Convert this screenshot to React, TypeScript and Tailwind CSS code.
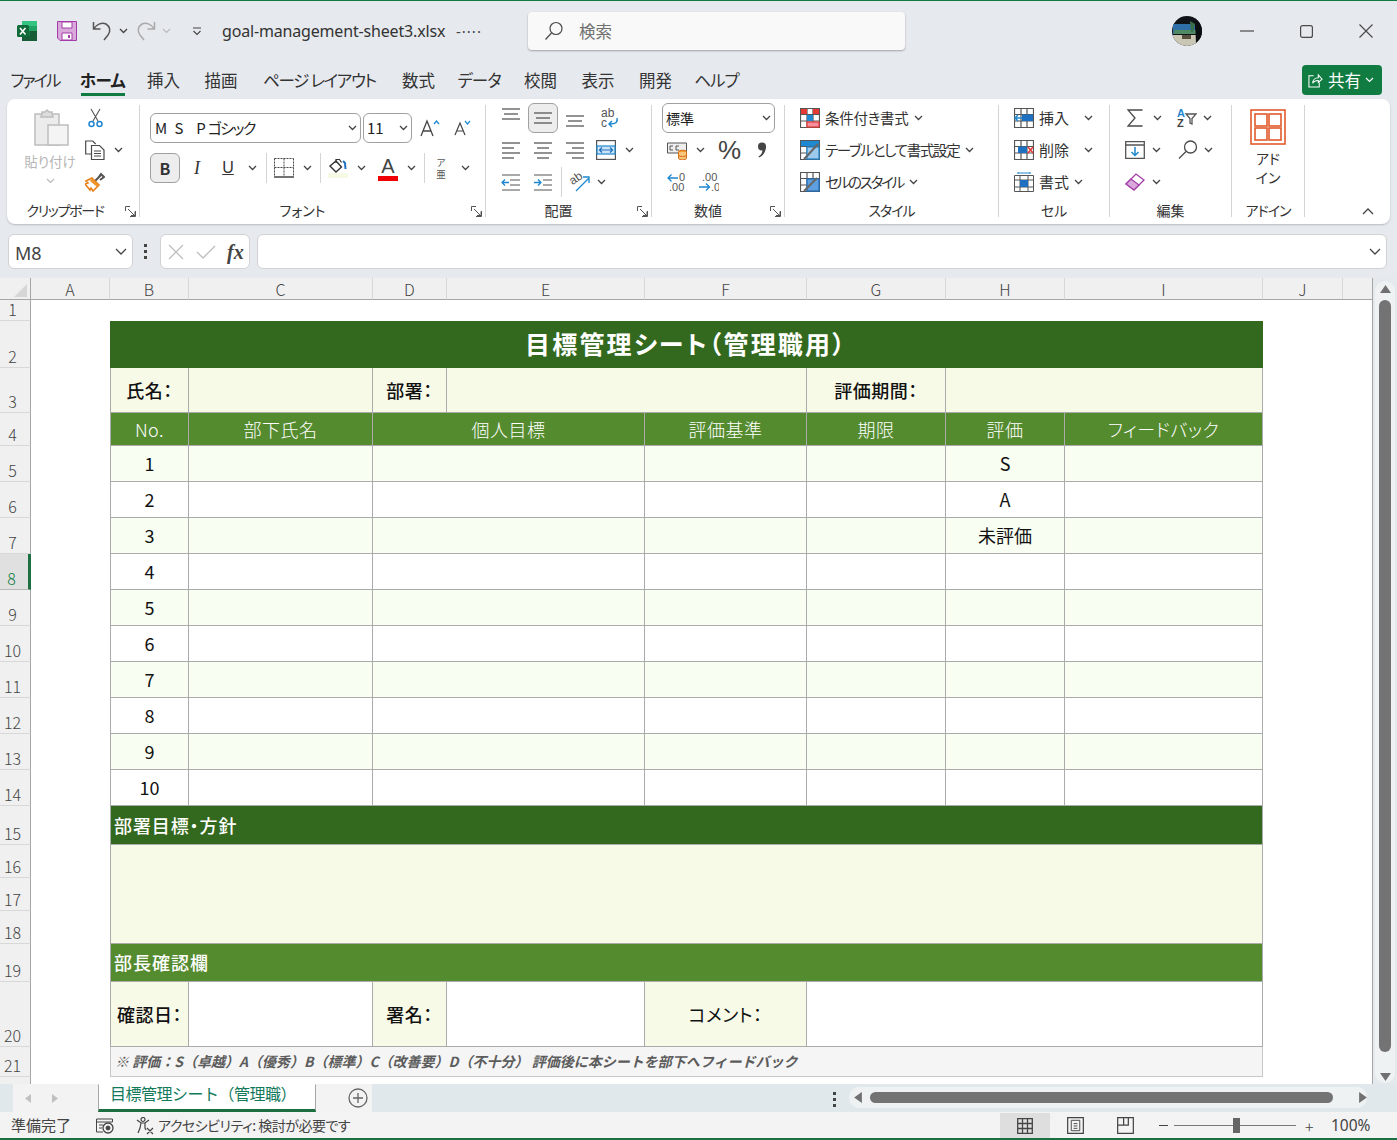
import type { ReactNode } from 'react'

interface IcoProps {
  className?: string
  vb?: string
  children?: ReactNode
}

function Ico({ className = '', vb = '0 0 20 20', children }: IcoProps) {
  return (
    <svg viewBox={vb} fill="none" stroke="#4a4a4a" strokeWidth="1.2" className={`block shrink-0 ${className}`}>
      {children}
    </svg>
  )
}

function Chev({ className = '' }: { className?: string }) {
  return (
    <svg viewBox="0 0 9 6" fill="none" stroke="#444" strokeWidth="1.3" className={`block shrink-0 w-[9px] h-[6px] ${className}`}>
      <path d="M1 1l3.5 3.5L8 1" />
    </svg>
  )
}

function Launcher() {
  return (
    <svg viewBox="0 0 11 11" fill="none" stroke="#555" className="absolute right-[3px] top-[8px] w-[11px] h-[11px]">
      <path d="M.5 5V.5H5M3 3l6 6M10.500 5v5.500H5M6 9.500h4V5.500" />
    </svg>
  )
}

function Sep() {
  return <div className="w-px h-[112px] mt-[6px] bg-[#d4d4d4] shrink-0" />
}

function VSep({ className = '' }: { className?: string }) {
  return <div className={`w-px h-[30px] bg-[#d4d4d4] shrink-0 ${className}`} />
}

function Group({ label, launcher, width, labelClass = '', children }: { label: string; launcher?: boolean; width: string; labelClass?: string; children: ReactNode }) {
  return (
    <>
      <div className={`flex flex-col pt-[3px] shrink-0 ${width}`}>
        <div className="h-[96px]">{children}</div>
        <div className={`relative flex justify-center h-[26px] text-[14px] leading-[24px] text-[#333] ${labelClass}`}>
          <span>{label}</span>
          {launcher && <Launcher />}
        </div>
      </div>
      <Sep />
    </>
  )
}

function Row({ className = '', children }: { className?: string; children: ReactNode }) {
  return <div className={`flex items-center h-[32px] ${className}`}>{children}</div>
}

// ---- ribbon icons

function AlignLines({ lines, className = '' }: { lines: number[][]; className?: string }) {
  return (
    <Ico className={`w-[20px] h-[20px] ${className}`}>
      {lines.map(([x1, x2, y]) => (
        <path key={y} d={`M${x1} ${y}H${x2}`} />
      ))}
    </Ico>
  )
}

function GridBase({ children, className = '' }: { children?: ReactNode; className?: string }) {
  return (
    <Ico className={`w-[20px] h-[20px] ${className}`}>
      <path d="M.5.5h19v19H.5zM.5 6.5h19M.5 13h19M7 .5v19M13 .5v19" stroke="#555" />
      {children}
    </Ico>
  )
}

function ExcelLogo() {
  return (
    <svg viewBox="0 0 20 20" className="block w-[20px] h-[20px]">
      <rect x="5" y="0" width="15" height="20" rx="1.5" fill="#21a366" />
      <rect x="5" y="0" width="15" height="5" fill="#33c481" />
      <rect x="12.5" y="5" width="7.5" height="5" fill="#21a366" />
      <rect x="5" y="10" width="7.5" height="5" fill="#107c41" />
      <rect x="12.5" y="10" width="7.5" height="5" fill="#185c37" />
      <rect x="5" y="15" width="15" height="5" fill="#185c37" />
      <rect x="0" y="4" width="12" height="12" rx="1.5" fill="#0f6b3a" />
      <path d="M3 7l5.5 6.5M8.5 7L3 13.5" stroke="#fff" strokeWidth="1.6" />
    </svg>
  )
}

function Avatar() {
  return (
    <svg viewBox="0 0 30 30" className="block w-[30px] h-[30px]">
      <clipPath id="av">
        <circle cx="15" cy="15" r="15" />
      </clipPath>
      <g clipPath="url(#av)">
        <rect width="30" height="30" fill="#101418" />
        <rect x="1" y="8" width="22" height="10" fill="#2f6fa8" />
        <rect x="2" y="14" width="22" height="4" fill="#4f8a64" />
        <path d="M1 19h26v11H1z" fill="#c9c6b4" />
        <path d="M18 5l5 3-2 8h-2z" fill="#38704a" />
        <rect x="10" y="19" width="9" height="4" fill="#57503f" />
        <path d="M23 2h7v26h-6z" fill="#0c0f12" />
      </g>
    </svg>
  )
}

const TABS = [
  { t: 'ファイル', c: 'w-[46px] tracking-[-2px]' },
  { t: 'ホーム', c: 'w-[43px] ml-[23px] tracking-[-0.5px]', on: true },
  { t: '挿入', c: 'w-[33px] ml-[23px]' },
  { t: '描画', c: 'w-[34px] ml-[24px]' },
  { t: 'ページ レイアウト', c: 'w-[111px] ml-[26px] tracking-[-1.300px]' },
  { t: '数式', c: 'w-[33px] ml-[27px]' },
  { t: 'データ', c: 'w-[40px] ml-[24px] tracking-[-1px]' },
  { t: '校閲', c: 'w-[33px] ml-[25px]' },
  { t: '表示', c: 'w-[34px] ml-[24px]' },
  { t: '開発', c: 'w-[33px] ml-[24px]' },
  { t: 'ヘルプ', c: 'w-[41px] ml-[24px] tracking-[-1px]' },
]

function TitleBar() {
  return (
    <div className="flex items-center h-[60px] shrink-0">
      <div className="ml-[17px]"><ExcelLogo /></div>
      <svg viewBox="0 0 20 20" className="block w-[20px] h-[20px] ml-[20px]">
        <path d="M.5.5h19v19H3L.5 17z" fill="#d9a9dc" stroke="#a33ca8" />
        <path d="M5 1h10v6H5zM5 12h10v7H5z" fill="#fff" stroke="#a33ca8" />
        <path d="M11 14h2v3h-2z" fill="#a33ca8" />
      </svg>
      <Ico className="w-[20px] h-[20px] ml-[15px]" vb="0 0 20 20">
        <path d="M1.5 1v7h7M1.5 8C5 3 10 1 14 3c4 2.5 5 7 2 11l-4 5" strokeWidth="1.5" stroke="#555" />
      </Ico>
      <Chev className="ml-[7px]" />
      <svg viewBox="0 0 20 20" fill="none" stroke="#aaa" strokeWidth="1.5" className="block w-[20px] h-[20px] ml-[8px]">
        <path d="M18.5 1v7h-7M18.5 8C15 3 10 1 6 3c-4 2.5-5 7-2 11l4 5" />
      </svg>
      <svg viewBox="0 0 9 6" fill="none" stroke="#bbb" strokeWidth="1.2" className="block w-[9px] h-[6px] ml-[6px]"><path d="M1 1l3.5 3.5L8 1" /></svg>
      <svg viewBox="0 0 10 9" fill="none" stroke="#444" strokeWidth="1.1" className="block w-[10px] h-[9px] ml-[21px]"><path d="M1 1h8M1.5 4l3.5 3.500L8.500 4" /></svg>
      <span className="ml-[20px] w-[234px] whitespace-nowrap font-['Noto_Sans',sans-serif] text-[16px] text-[#333] tracking-[-0.170px]">goal-management-sheet3.xlsx</span>
      <span className="w-[72px] font-['Noto_Sans',sans-serif] text-[15px] text-[#444] tracking-[1px]">-····</span>
      <div className="flex items-center w-[377px] h-[38px] rounded-[4px] bg-[#f9f9f9] shadow-[0_1px_2px_rgba(0,0,0,0.3)]">
        <Ico className="w-[20px] h-[20px] ml-[16px]">
          <circle cx="12" cy="7.500" r="6" />
          <path d="M7.500 12l-6 6.500" />
        </Ico>
        <span className="ml-[15px] text-[16.500px] text-[#707070]">検索</span>
      </div>
      <div className="ml-[267px]"><Avatar /></div>
      <Ico className="w-[14px] h-[14px] ml-[38px]" vb="0 0 14 14"><path d="M0 7h14" /></Ico>
      <Ico className="w-[13px] h-[13px] ml-[46px]" vb="0 0 13 13"><rect x=".6" y=".6" width="11.800" height="11.800" rx="2" /></Ico>
      <Ico className="w-[14px] h-[14px] ml-[46px]" vb="0 0 14 14"><path d="M.5.5l13 13M13.500.5L.5 13.500" /></Ico>
    </div>
  )
}

function TabBar() {
  return (
    <div className="flex h-[38px] shrink-0">
      <div className="flex ml-[12px] pt-[7px]">
        {TABS.map(({ t, c, on }) => (
          <div key={t} className={`${c} h-[26px] flex flex-col items-center whitespace-nowrap text-[16.500px] leading-[24px] ${on ? 'font-bold text-[#222]' : 'text-[#333]'}`}>
            <span>{t}</span>
            {on && <div className="w-[44px] h-[3px] bg-[#107c41] mt-[1px] shrink-0" />}
          </div>
        ))}
      </div>
      <div className="ml-auto mr-[15px] mt-[4px] flex items-center w-[80px] h-[30px] rounded-[4px] bg-[#107c41] text-white text-[16.500px]">
        <svg viewBox="0 0 16 16" fill="none" stroke="#fff" strokeWidth="1.1" className="block w-[15px] h-[15px] ml-[6px]">
          <path d="M6 3H1v12h11v-5M5 11c0-4 3-6 6-6V2l4 4.500L11 10V8c-3 0-5 1-6 3z" />
        </svg>
        <span className="ml-[5px]">共有</span>
        <svg viewBox="0 0 9 6" fill="none" stroke="#fff" strokeWidth="1.2" className="block w-[9px] h-[6px] ml-[4px]"><path d="M1 1l3.500 3.500L8 1" /></svg>
      </div>
    </div>
  )
}

function Clipboard() {
  return (
    <Group label="クリップボード" launcher width="w-[132px]" labelClass="pr-[16px] tracking-[-1.300px]">
      <div className="relative h-full">
        <div className="flex h-full">
          <div className="flex flex-col items-center w-[52px] ml-[17px]">
            <svg viewBox="0 0 36 38" fill="#ececec" stroke="#bdbdbd" strokeWidth="1.5" className="block w-[36px] h-[38px] mt-[7px] ml-[4px]">
              <path d="M1 5h24v31H1z" />
              <path d="M8 5V3h3l2-2 2 2h3v2l1 3H7z" fill="#ddd" />
              <path d="M14 16h20v20H14z" fill="#f4f4f4" />
            </svg>
            <span className="mt-[5px] text-[13.500px] leading-[18px] text-[#b5b5b5]">貼り付け</span>
            <svg viewBox="0 0 9 6" fill="none" stroke="#bbb" strokeWidth="1.2" className="block w-[9px] h-[6px] mt-[8px]"><path d="M1 1l3.500 3.500L8 1" /></svg>
          </div>
          <div className="flex flex-col ml-[9px]">
            <Row>
              <svg viewBox="0 0 15 20" fill="none" stroke="#555" strokeWidth="1.1" className="block w-[15px] h-[20px] ml-[3px]">
                <path d="M3 1l7 12M12 1L5 13" />
                <circle cx="3.500" cy="16" r="2.500" stroke="#1e88d0" strokeWidth="1.500" />
                <circle cx="11.500" cy="16" r="2.500" stroke="#1e88d0" strokeWidth="1.500" />
              </svg>
            </Row>
            <Row>
              <Ico className="w-[20px] h-[20px]">
                <path d="M6 14H.7V1h7l3 3" />
                <path d="M6.500 5.500h8l4.500 4.500v9.500H6.500z" fill="#fff" />
                <path d="M9 11h7M9 13.500h7M9 16h7" strokeWidth="1" />
              </Ico>
              <Chev className="ml-[9px]" />
            </Row>
            <Row>
              <svg viewBox="0 0 20 20" className="block w-[20px] h-[20px]" fill="none">
                <path d="M10 9l6-6M13 6l3-4 3 3-4 3" stroke="#555" strokeWidth="2" />
                <path d="M7 6l7 7-6 6-2-3-1 2-5-6 3-1-2-2z" fill="#fff" stroke="#e8801a" strokeWidth="1.600" />
                <path d="M7 6.500l7 6.500-2.500 1.500L5 9z" fill="#f0942a" />
              </svg>
            </Row>
          </div>
        </div>
      </div>
    </Group>
  )
}

function FontGroup() {
  return (
    <Group label="フォント" launcher width="w-[345px]" labelClass="pr-[20px]">
      <div className="flex items-center mt-[11px] h-[30px] ml-[10px]">
        <div className="flex items-center w-[211px] h-[30px] rounded-[6px] border border-[#a0a0a0] text-[15px] text-[#222]">
          <span className="ml-[4px] whitespace-pre tracking-[2px]">M S  P</span>
          <span className="tracking-[-1.500px]">ゴシック</span>
          <Chev className="ml-auto mr-[3px]" />
        </div>
        <div className="flex items-center w-[49px] h-[30px] ml-[2px] rounded-[6px] border border-[#a0a0a0] text-[15px] text-[#222]">
          <span className="ml-[3px]">11</span>
          <Chev className="ml-auto mr-[3px]" />
        </div>
        <svg viewBox="0 0 20 18" fill="none" stroke="#444" strokeWidth="1.3" className="block w-[20px] h-[18px] ml-[8px]">
          <path d="M1 17L7 2l6 15M3 12h8" />
          <path d="M14 5l2.500-3L19 5" stroke="#1e88d0" />
        </svg>
        <svg viewBox="0 0 18 16" fill="none" stroke="#444" strokeWidth="1.2" className="block w-[18px] h-[16px] ml-[14px]">
          <path d="M1 15L6 3l5 12M3 11h6" />
          <path d="M11 1l2.500 3L16 1" stroke="#1e88d0" />
        </svg>
      </div>
      <div className="flex items-center mt-[10px] h-[30px] ml-[10px]">
        <div className="flex items-center justify-center w-[30px] h-[30px] rounded-[6px] border border-[#a0a0a0] bg-[#ededed] text-[16px] font-bold text-[#333]">B</div>
        <span className="w-[14px] ml-[10px] text-center font-['Liberation_Serif',serif] italic text-[18px] text-[#333]">I</span>
        <span className="w-[14px] ml-[17px] text-center font-['Liberation_Sans',sans-serif] underline text-[16px] text-[#333]">U</span>
        <Chev className="ml-[13px]" />
        <VSep className="ml-[9px]" />
        <svg viewBox="0 0 20 20" fill="none" stroke="#444" strokeDasharray="2 1" className="block w-[20px] h-[20px] ml-[7px]">
          <path d="M.5.500h19M.500.500v18M19.500.500v18M.500 9.500h19M10 .500v18" />
          <path d="M0 19h20" strokeDasharray="none" strokeWidth="1.500" />
        </svg>
        <Chev className="ml-[9px]" />
        <VSep className="ml-[8px]" />
        <svg viewBox="0 0 20 20" fill="none" className="block w-[20px] h-[20px] ml-[7px]">
          <rect x="0" y="15" width="20" height="5" fill="#f6f9e4" />
          <path d="M2 8l6-5 5.500 6-5.500 5z" stroke="#333" strokeWidth="1.400" />
          <path d="M8 5V1.500h3.500l2 3" stroke="#333" strokeWidth="1.200" />
          <path d="M15 3l2 2 .5 6" stroke="#1e70c0" strokeWidth="2" />
        </svg>
        <Chev className="ml-[9px]" />
        <div className="flex flex-col items-center w-[20px] ml-[12px]">
          <span className="font-['Liberation_Sans',sans-serif] text-[20px] leading-[20px] text-[#444]">A</span>
          <div className="w-[20px] h-[5px] bg-[#f00000]" />
        </div>
        <Chev className="ml-[9px]" />
        <VSep className="ml-[8px]" />
        <div className="flex flex-col items-center w-[12px] ml-[10px] text-[9.500px] leading-[12px] text-[#555]">
          <span>ア</span>
          <span>亜</span>
        </div>
        <Chev className="ml-[14px]" />
      </div>
    </Group>
  )
}

function AlignGroup() {
  return (
    <Group label="配置" launcher width="w-[165px]" labelClass="pr-[20px]">
      <Row className="pl-[15px]">
        <AlignLines lines={[[1, 19, 3], [3, 17, 8], [1, 19, 13]]} className="-mt-[5px]" />
        <div className="flex items-center justify-center w-[30px] h-[30px] ml-[7px] rounded-[6px] border border-[#a0a0a0] bg-[#ededed]">
          <AlignLines lines={[[1, 19, 5], [3, 17, 10], [1, 19, 15]]} />
        </div>
        <AlignLines lines={[[1, 19, 8], [3, 17, 13], [1, 19, 18]]} className="ml-[7px]" />
        <svg viewBox="0 0 20 22" fill="none" stroke="#555" className="block w-[20px] h-[22px] ml-[14px] overflow-visible">
          <text x="2" y="10" fontSize="12" fill="#555" stroke="none" fontFamily="Liberation Sans">ab</text>
          <text x="2" y="20" fontSize="12" fill="#555" stroke="none" fontFamily="Liberation Sans">c</text>
          <path d="M18 11c1 4-1 6-7 6M13 14l-3 3 3 3" stroke="#1e88d0" strokeWidth="1.500" />
        </svg>
      </Row>
      <Row className="pl-[15px]">
        <AlignLines lines={[[1, 19, 3], [1, 13, 8], [1, 19, 13], [1, 13, 18]]} />
        <AlignLines lines={[[1, 19, 3], [4, 16, 8], [1, 19, 13], [4, 16, 18]]} className="ml-[12px]" />
        <AlignLines lines={[[1, 19, 3], [7, 19, 8], [1, 19, 13], [7, 19, 18]]} className="ml-[12px]" />
        <svg viewBox="0 0 20 20" fill="none" stroke="#555" strokeWidth="1.200" className="block w-[20px] h-[20px] ml-[11px]">
          <rect x=".6" y=".6" width="18.800" height="18.800" fill="#fff" />
          <rect x="1" y="6" width="18" height="8" fill="#cde4f5" stroke="#1e88d0" />
          <path d="M4 10h12M6 7.500L3.500 10 6 12.500M14 7.500l2.500 2.500-2.500 2.500" stroke="#1e70c0" />
        </svg>
        <Chev className="ml-[9px]" />
      </Row>
      <Row className="pl-[15px]">
        <svg viewBox="0 0 20 20" fill="none" stroke="#555" className="block w-[20px] h-[20px]">
          <path d="M1 3h18M9 8h10M9 13h10M1 18h18" />
          <path d="M8 10.500H1M4 7.500l-3 3 3 3" stroke="#1e88d0" strokeWidth="1.300" />
        </svg>
        <svg viewBox="0 0 20 20" fill="none" stroke="#555" className="block w-[20px] h-[20px] ml-[12px]">
          <path d="M1 3h18M10 8h9M10 13h9M1 18h18" />
          <path d="M1 10.500h7M5 7.500l3 3-3 3" stroke="#1e88d0" strokeWidth="1.300" />
        </svg>
        <VSep className="ml-[8px]" />
        <svg viewBox="0 0 21 20" fill="none" stroke="#1e88d0" strokeWidth="1.300" className="block w-[21px] h-[20px] ml-[7px] overflow-visible">
          <text x="1" y="11" fontSize="12" fill="#555" stroke="none" fontFamily="Liberation Sans" transform="rotate(-35 6 8)">ab</text>
          <path d="M7 19L20 6M14 5h6v6" />
        </svg>
        <Chev className="ml-[7px]" />
      </Row>
    </Group>
  )
}

function NumberGroup() {
  return (
    <Group label="数値" launcher width="w-[132px]" labelClass="pr-[20px]">
      <div className="flex items-center mt-[1px] ml-[10px] w-[113px] h-[30px] rounded-[6px] border border-[#a0a0a0] text-[14px] text-[#222]">
        <span className="ml-[3px]">標準</span>
        <Chev className="ml-auto mr-[3px]" />
      </div>
      <Row className="pl-[15px] mt-[1px]">
        <svg viewBox="0 0 21 20" fill="none" stroke="#555" className="block w-[21px] h-[20px]">
          <path d="M.5 3h19v10H.5z" fill="#eee" />
          <path d="M6 6H3v4h3M12 6H9v4h3" />
          <ellipse cx="15.500" cy="12" rx="4" ry="1.800" fill="#f0a030" stroke="#d96b10" />
          <path d="M11.500 12v6c0 2.500 8 2.500 8 0v-6M11.500 15c0 2 8 2 8 0" fill="#f6c67f" stroke="#d96b10" />
        </svg>
        <Chev className="ml-[8px]" />
        <span className="ml-[13px] w-[21px] text-center font-['Liberation_Sans',sans-serif] text-[26px] leading-[30px] text-[#444]">%</span>
        <svg viewBox="0 0 12 16" fill="#444" className="block w-[12px] h-[16px] ml-[17px]">
          <circle cx="6" cy="4.500" r="4" />
          <path d="M9.800 4.500C10 10 7 14 3 15.500l-.5-1C5 13 6.500 10.500 6.500 8z" />
        </svg>
      </Row>
      <Row className="pl-[15px]">
        <svg viewBox="0 0 20 20" className="block w-[20px] h-[20px]" fill="none">
          <path d="M11 6H1M4.500 2.500L1 6l3.500 3.500" stroke="#1e88d0" strokeWidth="1.300" />
          <text x="12" y="9" fontSize="11" fill="#555" fontFamily="Liberation Sans">0</text>
          <text x="2" y="19" fontSize="11" fill="#555" fontFamily="Liberation Sans">.00</text>
        </svg>
        <svg viewBox="0 0 20 20" className="block w-[20px] h-[20px] ml-[12px]" fill="none">
          <text x="3" y="9" fontSize="11" fill="#555" fontFamily="Liberation Sans">.00</text>
          <path d="M0 15h10M7 11.500l3.500 3.500L7 18.500" stroke="#1e88d0" strokeWidth="1.300" />
          <text x="12" y="19" fontSize="11" fill="#555" fontFamily="Liberation Sans">.0</text>
        </svg>
      </Row>
    </Group>
  )
}

function StyleGroup() {
  const rows = [
    {
      t: '条件付き書式',
      c: 'tracking-[-0.300px]',
      icon: (
        <GridBase>
          <rect x="1" y="1" width="6" height="5" fill="#e53935" stroke="none" />
          <rect x="13" y="1" width="6" height="5" fill="#e53935" stroke="none" />
          <rect x="7" y="7" width="6" height="6" fill="#1e88d0" stroke="none" />
          <rect x="7" y="14" width="12" height="5" fill="#f48fa0" stroke="#e53935" />
        </GridBase>
      ),
    },
    {
      t: 'テーブルとして書式設定',
      c: 'tracking-[-1.300px]',
      icon: (
        <GridBase>
          <rect x="1" y="1" width="18" height="5" fill="#1e88d0" stroke="none" />
          <rect x="7" y="7" width="12" height="12" fill="#9cc9ec" stroke="#1e88d0" />
          <path d="M18 4L7 16l-3 3" stroke="#666" strokeWidth="2" />
        </GridBase>
      ),
    },
    {
      t: 'セルのスタイル',
      c: 'tracking-[-2.200px]',
      icon: (
        <GridBase>
          <rect x="7" y="7" width="12" height="12" fill="#5f9fdd" stroke="#1e70c0" />
          <path d="M17 6L7 16l-3 3" stroke="#666" strokeWidth="2" />
        </GridBase>
      ),
    },
  ]
  return (
    <Group label="スタイル" width="w-[213px]" labelClass="tracking-[-1px]">
      {rows.map(({ t, c, icon }) => (
        <Row key={t} className="pl-[15px] text-[14.500px] text-[#333]">
          {icon}
          <span className={`ml-[5px] whitespace-nowrap ${c}`}>{t}</span>
          <Chev className="ml-[6px]" />
        </Row>
      ))}
    </Group>
  )
}

function CellGroup() {
  return (
    <Group label="セル" width="w-[110px]">
      <Row className="pl-[15px] text-[15px] text-[#333]">
        <GridBase>
          <rect x="8" y="6.500" width="11" height="6.500" fill="#1e70c0" stroke="none" />
          <path d="M8 10H1M4 7l-3 3 3 3" stroke="#1e88d0" strokeWidth="1.500" />
        </GridBase>
        <span className="ml-[5px] w-[33px]">挿入</span>
        <Chev className="ml-[12px]" />
      </Row>
      <Row className="pl-[15px] text-[15px] text-[#333]">
        <GridBase>
          <rect x="4" y="6.500" width="9" height="6.500" fill="#1e70c0" stroke="none" />
          <path d="M14 7l5 6M19 7l-5 6" stroke="#e53935" strokeWidth="1.500" />
        </GridBase>
        <span className="ml-[5px] w-[33px]">削除</span>
        <Chev className="ml-[12px]" />
      </Row>
      <Row className="pl-[15px] text-[15px] text-[#333]">
        <svg viewBox="0 0 20 20" fill="none" stroke="#555" className="block w-[20px] h-[20px]">
          <path d="M.5 3.500h19v16H.500zM.500 8h19M.500 15h19M6 3.500v16M14 3.500v16" />
          <rect x="6" y="8" width="8" height="7" fill="#1e70c0" stroke="none" />
          <path d="M4 1h12M4 0v2M16 0v2" stroke="#1e88d0" />
        </svg>
        <span className="ml-[5px] w-[33px]">書式</span>
        <Chev className="ml-[2px]" />
      </Row>
    </Group>
  )
}

function EditGroup() {
  return (
    <Group label="編集" width="w-[121px]">
      <Row className="pl-[17px]">
        <Ico className="w-[16px] h-[18px]" vb="0 0 16 18"><path d="M15.500 1H1l7 8-7 8h14.500" strokeWidth="1.300" /></Ico>
        <Chev className="ml-[10px]" />
        <svg viewBox="0 0 20 20" fill="none" stroke="#555" className="block w-[20px] h-[20px] ml-[15px] overflow-visible">
          <text x="0" y="9" fontSize="11" fontWeight="700" fill="#1e88d0" stroke="none" fontFamily="Liberation Sans">A</text>
          <text x="0" y="19" fontSize="11" fontWeight="700" fill="#444" stroke="none" fontFamily="Liberation Sans">Z</text>
          <path d="M9 6h10l-4 4.500V16l-2-1v-4.500z" strokeWidth="1.300" />
        </svg>
        <Chev className="ml-[6px]" />
      </Row>
      <Row className="pl-[15px]">
        <svg viewBox="0 0 20 18" fill="none" stroke="#555" strokeWidth="1.300" className="block w-[20px] h-[18px]">
          <path d="M.7.700h18.600v16.600H.700zM.700 4h18.600" />
          <path d="M10 6v8M6.500 11l3.500 3.500 3.500-3.500" stroke="#1e88d0" strokeWidth="1.500" />
        </svg>
        <Chev className="ml-[7px]" />
        <Ico className="w-[20px] h-[20px] ml-[17px]" vb="0 0 20 20">
          <circle cx="12.500" cy="7" r="6" strokeWidth="1.300" />
          <path d="M8 11.500l-7 7" strokeWidth="1.300" />
        </Ico>
        <Chev className="ml-[6px]" />
      </Row>
      <Row className="pl-[15px]">
        <svg viewBox="0 0 20 20" fill="none" stroke="#a33ca8" strokeWidth="1.300" className="block w-[20px] h-[20px]">
          <path d="M1 12L11 2l8 6-10 10z" fill="#fff" />
          <path d="M1 12l5-5 8 6-5 5z" fill="#d9a9dc" />
        </svg>
        <Chev className="ml-[7px]" />
      </Row>
    </Group>
  )
}

function Ribbon() {
  return (
    <div className="flex mx-[7px] h-[125px] shrink-0 rounded-[8px] bg-white shadow-[0_1px_2px_rgba(0,0,0,0.2)]">
      <Clipboard />
      <FontGroup />
      <AlignGroup />
      <NumberGroup />
      <StyleGroup />
      <CellGroup />
      <EditGroup />
      <Group label="アドイン" width="w-[72px]" labelClass="tracking-[-1px]">
        <div className="flex flex-col items-center">
          <svg viewBox="0 0 36 36" fill="none" stroke="#e05a2b" strokeWidth="1.600" className="block w-[36px] h-[36px] mt-[7px]">
            <rect x="1" y="1" width="34" height="34" />
            <rect x="5" y="5" width="12" height="12" />
            <rect x="19" y="5" width="12" height="12" />
            <rect x="5" y="19" width="12" height="12" />
            <rect x="19" y="19" width="12" height="12" />
          </svg>
          <span className="mt-[4px] text-[14px] leading-[19px] text-[#333]">アド</span>
          <span className="text-[14px] leading-[19px] text-[#333]">イン</span>
        </div>
      </Group>
      <div className="flex-1 flex justify-end items-end pb-[9px] pr-[16px]">
        <svg viewBox="0 0 12 7" fill="none" stroke="#444" strokeWidth="1.300" className="block w-[12px] h-[7px]"><path d="M1 6l5-5 5 5" /></svg>
      </div>
    </div>
  )
}

function FormulaBar() {
  return (
    <div className="flex items-center mt-[10px] ml-[8px] mr-[10px] h-[35px] shrink-0">
      <div className="flex items-center w-[125px] h-[35px] rounded-[6px] border border-[#d2d2d2] bg-white">
        <span className="ml-[6px] pt-[3px] font-['Noto_Sans',sans-serif] text-[18px] text-[#444]">M8</span>
        <svg viewBox="0 0 12 7" fill="none" stroke="#444" strokeWidth="1.300" className="block w-[12px] h-[7px] ml-auto mr-[5px]"><path d="M1 1l5 5 5-5" /></svg>
      </div>
      <div className="flex flex-col gap-[3px] ml-[11px]">
        <div className="w-[3px] h-[3px] bg-[#444]" />
        <div className="w-[3px] h-[3px] bg-[#444]" />
        <div className="w-[3px] h-[3px] bg-[#444]" />
      </div>
      <div className="flex items-center w-[90px] h-[35px] ml-[13px] rounded-[6px] border border-[#d2d2d2] bg-white">
        <svg viewBox="0 0 16 16" fill="none" stroke="#bdbdbd" strokeWidth="1.300" className="block w-[16px] h-[16px] ml-[7px]"><path d="M1 1l14 14M15 1L1 15" /></svg>
        <svg viewBox="0 0 20 14" fill="none" stroke="#bdbdbd" strokeWidth="1.300" className="block w-[20px] h-[14px] ml-[12px]"><path d="M1 7l6 6L19 1" /></svg>
        <span className="ml-[11px] font-['Liberation_Serif',serif] italic font-bold text-[20px] text-[#444]">fx</span>
      </div>
      <div className="flex items-center flex-1 h-[35px] ml-[7px] rounded-[6px] border border-[#d2d2d2] bg-white">
        <svg viewBox="0 0 12 7" fill="none" stroke="#444" strokeWidth="1.300" className="block w-[12px] h-[7px] ml-auto mr-[5px]"><path d="M1 1l5 5 5-5" /></svg>
      </div>
    </div>
  )
}

// ---- sheet

const LETTERS = ['A', 'B', 'C', 'D', 'E', 'F', 'G', 'H', 'I']
const line = 'border-r border-b border-[#ababab]'

function RowHead({ n, active }: { n: number; active?: boolean }) {
  return (
    <div className={`flex items-end justify-center pr-[5px] pb-[1px] border-b overflow-hidden text-[16px] leading-[19px] font-light ${active ? 'bg-[#e0e0e0] border-r-[3px] border-r-[#1d6f42] border-b-[#b8b8b8] text-[#107c41]' : 'bg-[#f0f0f0] border-r border-r-[#a6a6a6] border-b-[#d8d8d8] text-[#444]'}`}>
      {n}
    </div>
  )
}

function Blank({ className = '' }: { className?: string }) {
  return <div className={className} />
}

function Cell({ className = '', children }: { className?: string; children?: ReactNode }) {
  return <div className={`flex items-center justify-center whitespace-nowrap overflow-hidden ${line} ${className}`}>{children}</div>
}

function DataRow({ i, ev }: { i: number; ev?: string }) {
  const bg = i % 2 === 0 ? 'bg-[#f8fef2]' : 'bg-white'
  return (
    <>
      <RowHead n={i + 5} active={i === 3} />
      <Blank />
      <Cell className={`${bg} border-l text-[18px] text-[#111]`}>{i + 1}</Cell>
      <Cell className={bg} />
      <Cell className={`${bg} col-span-2`} />
      <Cell className={bg} />
      <Cell className={bg} />
      <Cell className={`${bg} text-[18px] text-[#111]`}>{ev}</Cell>
      <Cell className={bg} />
      <Blank />
    </>
  )
}

function Sheet() {
  const label = 'bg-[#f8fae8] text-[18px] font-medium text-[#111] tracking-[0.5px]'
  const head = 'bg-[#558b2f] text-[18px] font-light text-white tracking-[0.5px]'
  return (
    <div className="grid flex-1 bg-white grid-cols-[31px_79px_79px_184px_74px_198px_162px_139px_119px_198px_109px] grid-rows-[22px_21px_47px_45px_33px_repeat(10,36px)_39px_33px_33px_33px_38px_65px_30px_7px] border-r border-[#a6a6a6]">
      <div className="flex items-end justify-end bg-[#f0f0f0] border-r border-b border-[#a6a6a6]">
        <svg viewBox="0 0 13 13" className="block w-[13px] h-[13px] mr-[3px] mb-[2px]"><path d="M13 0v13H0z" fill="#d6d6d6" /></svg>
      </div>
      {LETTERS.map(l => (
        <div key={l} className="flex items-center justify-center bg-[#f0f0f0] border-r border-b border-r-[#d8d8d8] border-b-[#a6a6a6] text-[16px] font-light text-[#444] overflow-hidden">{l}</div>
      ))}
      <div className="flex bg-[#f0f0f0] border-b border-[#a6a6a6] overflow-hidden">
        <div className="flex items-center justify-center w-[80px] border-r border-[#d8d8d8] text-[16px] font-light text-[#444]">J</div>
      </div>

      <RowHead n={1} />
      <div className="col-span-10" />

      <RowHead n={2} />
      <Blank />
      <Cell className="col-span-8 bg-[#33691e] !border-[#33691e] text-[25px] font-bold text-white tracking-[2.200px]">目標管理シート（管理職用）</Cell>
      <Blank />

      <RowHead n={3} />
      <Blank />
      <Cell className={`${label} border-l`}>氏名：</Cell>
      <Cell className="bg-[#f8fae8]" />
      <Cell className={label}>部署：</Cell>
      <Cell className="col-span-2 bg-[#f8fae8]" />
      <Cell className={label}>評価期間：</Cell>
      <Cell className="col-span-2 bg-[#f8fae8]" />
      <Blank />

      <RowHead n={4} />
      <Blank />
      <Cell className={`${head} border-l`}>No.</Cell>
      <Cell className={head}>部下氏名</Cell>
      <Cell className={`${head} col-span-2`}>個人目標</Cell>
      <Cell className={head}>評価基準</Cell>
      <Cell className={head}>期限</Cell>
      <Cell className={head}>評価</Cell>
      <Cell className={head}>フィードバック</Cell>
      <Blank />

      <DataRow i={0} ev="S" />
      <DataRow i={1} ev="A" />
      <DataRow i={2} ev="未評価" />
      <DataRow i={3} />
      <DataRow i={4} />
      <DataRow i={5} />
      <DataRow i={6} />
      <DataRow i={7} />
      <DataRow i={8} />
      <DataRow i={9} />

      <RowHead n={15} />
      <Blank />
      <Cell className="col-span-8 border-l !justify-start pl-[3px] bg-[#33691e] text-[18px] font-medium text-white tracking-[0.9px]">部署目標・方針</Cell>
      <Blank />

      <RowHead n={16} />
      <Blank />
      <Cell className="col-span-8 row-span-3 border-l bg-[#f8fae8]" />
      <Blank />
      <RowHead n={17} />
      <Blank />
      <Blank />
      <RowHead n={18} />
      <Blank />
      <Blank />

      <RowHead n={19} />
      <Blank />
      <Cell className="col-span-8 border-l !justify-start pl-[3px] bg-[#558b2f] text-[18px] font-medium text-white tracking-[1px]">部長確認欄</Cell>
      <Blank />

      <RowHead n={20} />
      <Blank />
      <Cell className={`${label} border-l`}>確認日：</Cell>
      <Cell className="bg-white" />
      <Cell className={label}>署名：</Cell>
      <Cell className="bg-white" />
      <Cell className={`${label} font-normal`}>コメント：</Cell>
      <Cell className="col-span-3 bg-white" />
      <Blank />

      <RowHead n={21} />
      <Blank />
      <Cell className="col-span-8 border-l !justify-start pl-[4px] bg-[#f5f5f5] !border-[#c8c8c8] text-[14px] font-bold italic text-[#5c5c5c] [font-feature-settings:normal]">※ 評価：S（卓越）A（優秀）B（標準）C（改善要）D（不十分） 評価後に本シートを部下へフィードバック</Cell>
      <Blank />

      <div className="bg-[#f0f0f0] border-r border-[#a6a6a6] overflow-hidden" />
      <div className="col-span-10" />
    </div>
  )
}

function VScroll() {
  return (
    <div className="w-[25px] shrink-0 bg-[#e3e9ec]">
      <div className="flex flex-col items-center w-[20px] ml-[2px] mt-[3px] mb-[1px] h-[802px] rounded-[10px] bg-[#eff2f3]">
        <svg viewBox="0 0 11 8" className="block w-[11px] h-[8px] mt-[4px] fill-[#707070]"><path d="M5.500 0L11 8H0z" /></svg>
        <div className="w-[12px] h-[752px] mt-[7px] rounded-[6px] bg-[#737373]" />
        <svg viewBox="0 0 11 8" className="block w-[11px] h-[8px] mt-[21px] fill-[#707070]"><path d="M5.500 8L0 0h11z" /></svg>
      </div>
    </div>
  )
}

function SheetTabs() {
  return (
    <div className="flex h-[29px] shrink-0 bg-[#e1e8eb] border-b border-[#f4f4f4]">
      <div className="flex items-center w-[85px] ml-[13px] bg-[#f3f3f3]">
        <svg viewBox="0 0 6 9" className="block w-[6px] h-[9px] ml-[12px] fill-[#c0c0c0]"><path d="M6 0v9L0 4.500z" /></svg>
        <svg viewBox="0 0 6 9" className="block w-[6px] h-[9px] ml-[21px] fill-[#c0c0c0]"><path d="M0 0v9l6-4.500z" /></svg>
      </div>
      <div className="w-[218px] h-[28px] bg-white border-b-[3px] border-[#1d6f42] border-x border-t border-x-[#a6a6a6] border-t-white pl-[11px] whitespace-nowrap text-[16px] leading-[17px] text-[#13795b] [font-feature-settings:normal] tracking-[-0.500px]">目標管理シート（管理職）</div>
      <div className="flex items-center w-[56px] bg-[#f3f3f3]">
        <svg viewBox="0 0 20 20" fill="none" stroke="#666" strokeWidth="1.300" className="block w-[20px] h-[20px] ml-[32px]">
          <circle cx="10" cy="10" r="9" />
          <path d="M5 10h10M10 5v10" />
        </svg>
      </div>
      <div className="flex flex-col gap-[3px] ml-[461px] mt-[8px]">
        <div className="w-[3px] h-[3px] bg-[#444]" />
        <div className="w-[3px] h-[3px] bg-[#444]" />
        <div className="w-[3px] h-[3px] bg-[#444]" />
      </div>
      <div className="flex items-center w-[518px] h-[21px] ml-[13px] mt-[3px] rounded-[10px] bg-[#eff2f3]">
        <svg viewBox="0 0 7 10" className="block w-[8px] h-[11px] ml-[5px] fill-[#707070]"><path d="M7 0v10L0 5z" /></svg>
        <div className="w-[463px] h-[11px] ml-[8px] rounded-[6px] bg-[#737373]" />
        <svg viewBox="0 0 7 10" className="block w-[8px] h-[11px] ml-[26px] fill-[#707070]"><path d="M0 0v10l7-5z" /></svg>
      </div>
    </div>
  )
}

function StatusBar() {
  return (
    <div className="flex items-center h-[25px] shrink-0 bg-[#f3f3f3] text-[14px] text-[#444]">
      <span className="ml-[11px] w-[60px] whitespace-nowrap text-[15px]">準備完了</span>
      <svg viewBox="0 0 18 16" fill="none" stroke="#444" className="block w-[18px] h-[16px] ml-[25px]">
        <path d="M.5 14V1h16v3H.5" />
        <path d="M3 7h4M3 10h3M.5 14H7" />
        <circle cx="12" cy="10" r="5" strokeWidth="1.300" />
        <circle cx="12" cy="10" r="2" fill="#444" />
      </svg>
      <svg viewBox="0 0 18 18" fill="none" stroke="#444" strokeWidth="1.200" className="block w-[18px] h-[18px] ml-[22px]">
        <circle cx="7" cy="2.500" r="2" />
        <path d="M1 3l4 3h4l4-3M5 6l-1 5-2 5M9 6v5l1 2M11 11l6 6M17 11l-6 6" />
      </svg>
      <span className="ml-[4px] w-[192px] whitespace-nowrap tracking-[-0.500px]">アクセシビリティ: 検討が必要です</span>
      <div className="flex items-center justify-center w-[50px] h-[25px] ml-[650px] bg-[#dedede]">
        <svg viewBox="0 0 16 16" stroke="#444" fill="none" strokeWidth="1.300" className="block w-[16px] h-[16px]">
          <path d="M.7.7h14.600v14.600H.700zM.700 5.500h14.600M.700 10.500h14.600M5.500.700v14.600M10.500.700v14.600" />
        </svg>
      </div>
      <svg viewBox="0 0 18 18" stroke="#444" fill="none" className="block w-[17px] h-[17px] ml-[17px]">
        <path d="M.7.7h16.600v16.600H.700z" strokeWidth="1.300" />
        <path d="M4.500 3.500h9v11h-9zM7 7h4M7 9.500h4M7 12h4" />
      </svg>
      <svg viewBox="0 0 18 18" stroke="#444" fill="none" strokeWidth="1.300" className="block w-[17px] h-[17px] ml-[33px]">
        <path d="M.7.7h16.600v16.600H.700zM7 .7v8H1M12 .7v8H7" />
      </svg>
      <div className="w-[9px] h-px bg-[#444] ml-[25px]" />
      <div className="flex items-center w-[122px] h-[15px] ml-[6px]">
        <div className="w-[59px] h-px bg-[#777]" />
        <div className="w-[7px] h-[15px] bg-[#666]" />
        <div className="flex-1 h-px bg-[#777]" />
      </div>
      <span className="ml-[9px] w-[9px] text-[16px] font-light leading-[16px]">+</span>
      <span className="ml-[17px] font-['Noto_Sans',sans-serif] text-[15.500px]">100%</span>
    </div>
  )
}

export default function App() {
  return (
    <div className="flex flex-col w-[1397px] h-[1140px] overflow-hidden bg-[#e6e9ee] border-t border-[#107c41] [font-family:'Noto_Sans_CJK_JP',sans-serif] [font-feature-settings:'palt']">
      <TitleBar />
      <TabBar />
      <Ribbon />
      <FormulaBar />
      <div className="flex h-[806px] mt-[9px] shrink-0">
        <Sheet />
        <VScroll />
      </div>
      <SheetTabs />
      <StatusBar />
      <div className="h-[2px] bg-[#1d6f42] shrink-0" />
    </div>
  )
}
